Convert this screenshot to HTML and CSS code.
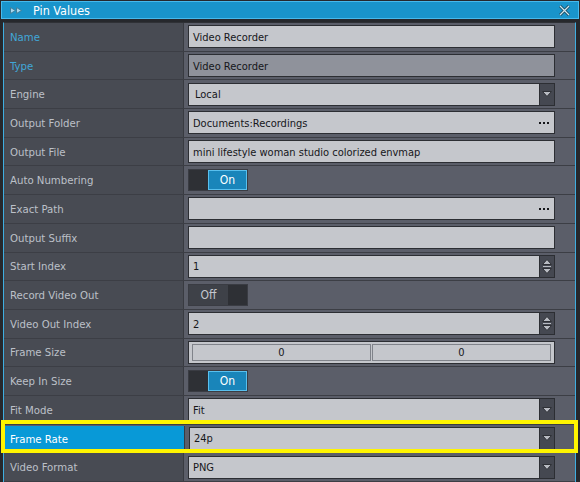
FILE: index.html
```html
<!DOCTYPE html>
<html>
<head>
<meta charset="utf-8">
<link rel="stylesheet" href="styles.css">
</head>
<body>
<div class="window">
  <div class="titlebar">
    <svg class="ff" width="13" height="7" viewBox="0 0 13 7"><path d="M0.5 0.5 L5.5 3.5 L0.5 6.5 Z M6.5 0.5 L11.5 3.5 L6.5 6.5 Z" fill="#a9d8ee" stroke="#3f7f9c" stroke-width="1"/></svg>
    <span class="title">Pin Values</span>
    <svg class="close" width="11" height="11" viewBox="0 0 11 11"><path d="M1 1 L10 10 M10 1 L1 10" stroke="#1d4a5e" stroke-width="3"/><path d="M1 1 L10 10 M10 1 L1 10" stroke="#cfe8f2" stroke-width="1.2"/></svg>
  </div>
  <div class="panel">
    <div class="row"><div class="label hl">Name</div><div class="val"><div class="field">Video Recorder</div></div></div>
    <div class="row"><div class="label hl">Type</div><div class="val"><div class="field dis">Video Recorder</div></div></div>
    <div class="row"><div class="label">Engine</div><div class="val"><div class="combo"><div class="field sel">Local</div><div class="btn"><svg width="10" height="6" viewBox="0 0 10 6"><path d="M0.5 0.5 L9.5 0.5 L5 5.5 Z" fill="#b8bbc2" stroke="#2e3036" stroke-width="1"/></svg></div></div></div></div>
    <div class="row"><div class="label">Output Folder</div><div class="val"><div class="field dots">Documents:Recordings<span class="ell"><i></i><i></i><i></i></span></div></div></div>
    <div class="row"><div class="label">Output File</div><div class="val"><div class="field">mini lifestyle woman studio colorized envmap</div></div></div>
    <div class="row"><div class="label">Auto Numbering</div><div class="val"><div class="toggle on"><span class="knob"></span><span class="state">On</span></div></div></div>
    <div class="row"><div class="label">Exact Path</div><div class="val"><div class="field dots"><span class="ell"><i></i><i></i><i></i></span></div></div></div>
    <div class="row"><div class="label">Output Suffix</div><div class="val"><div class="field"></div></div></div>
    <div class="row"><div class="label">Start Index</div><div class="val"><div class="combo"><div class="field">1</div><div class="btn spin"><svg width="10" height="17" viewBox="0 0 10 17"><path d="M0.5 6.5 L9.5 6.5 L5 1.5 Z M0.5 10.5 L9.5 10.5 L5 15.5 Z" fill="#b8bbc2" stroke="#2e3036" stroke-width="1"/><path d="M1 8.5 H9" stroke="#b8bbc2" stroke-width="1"/></svg></div></div></div></div>
    <div class="row"><div class="label">Record Video Out</div><div class="val"><div class="toggle off"><span class="state">Off</span><span class="knob"></span></div></div></div>
    <div class="row"><div class="label">Video Out Index</div><div class="val"><div class="combo"><div class="field">2</div><div class="btn spin"><svg width="10" height="17" viewBox="0 0 10 17"><path d="M0.5 6.5 L9.5 6.5 L5 1.5 Z M0.5 10.5 L9.5 10.5 L5 15.5 Z" fill="#b8bbc2" stroke="#2e3036" stroke-width="1"/><path d="M1 8.5 H9" stroke="#b8bbc2" stroke-width="1"/></svg></div></div></div></div>
    <div class="row"><div class="label">Frame Size</div><div class="val"><div class="pair"><div class="num">0</div><div class="num">0</div></div></div></div>
    <div class="row"><div class="label">Keep In Size</div><div class="val"><div class="toggle on"><span class="knob"></span><span class="state">On</span></div></div></div>
    <div class="row"><div class="label">Fit Mode</div><div class="val"><div class="combo"><div class="field">Fit</div><div class="btn"><svg width="10" height="6" viewBox="0 0 10 6"><path d="M0.5 0.5 L9.5 0.5 L5 5.5 Z" fill="#b8bbc2" stroke="#2e3036" stroke-width="1"/></svg></div></div></div></div>
    <div class="row"><div class="label act">Frame Rate</div><div class="val"><div class="combo"><div class="field">24p</div><div class="btn"><svg width="10" height="6" viewBox="0 0 10 6"><path d="M0.5 0.5 L9.5 0.5 L5 5.5 Z" fill="#b8bbc2" stroke="#2e3036" stroke-width="1"/></svg></div></div></div></div>
    <div class="row"><div class="label">Video Format</div><div class="val"><div class="combo"><div class="field">PNG</div><div class="btn"><svg width="10" height="6" viewBox="0 0 10 6"><path d="M0.5 0.5 L9.5 0.5 L5 5.5 Z" fill="#b8bbc2" stroke="#2e3036" stroke-width="1"/></svg></div></div></div></div>
  </div>
  <div class="highlight"></div>
</div>
</body>
</html>
```
FILE: styles.css
```css
* { box-sizing: border-box; }
html, body { margin: 0; padding: 0; }
body {
  background: #26282c;
  font-family: "DejaVu Sans Condensed", "Liberation Sans", sans-serif;
  font-size: 11px;
}
.window {
  position: relative;
  width: 580px;
  height: 482px;
  overflow: hidden;
  padding-top: 1px;
}
.titlebar {
  margin: 0 1px;
  height: 18px;
  background: #1994cb;
  border: 1px solid #46b9ec;
  display: flex;
  align-items: center;
  padding-left: 8px;
  padding-right: 8px;
}
.ff { display: block; }
.title {
  color: #ffffff;
  margin-left: 10px;
  font-size: 12.5px;
  flex: 1;
}
.close { display: block; }
.panel {
  margin: 3px 4px 0 3px;
  border-left: 1px solid #3eaee0;
  border-right: 1px solid #3eaee0;
  border-top: 1px solid #2f3136;
  background: #5b5e69;
}
.row {
  display: flex;
  height: 28.7px;
  border-bottom: 1px solid #3c3e45;
}
.label {
  width: 180px;
  flex: none;
  background: #484b53;
  border-right: 1px solid #393b41;
  color: #bcc0c8;
  display: flex;
  align-items: center;
  padding-left: 6px;
  padding-top: 1px;
  font-size: 11.3px;
}
.label.hl { color: #41a7d8; }
.label.act {
  color: #ffffff;
  background: #0899d7;
  margin: 1px 0 0 1px;
  padding-left: 5px;
}
.val {
  flex: 1;
  display: flex;
  align-items: center;
  padding-left: 4px;
  padding-right: 20px;
}
.field {
  height: 23px;
  flex: 1;
  width: 100%;
  background: #c5c7cc;
  border: 1px solid #2c2e33;
  color: #15161a;
  display: flex;
  align-items: center;
  padding-left: 4px;
  padding-top: 1px;
  font-size: 11px;
  white-space: nowrap;
}
.field.dis { background: #8f929b; }
.field.sel { padding-left: 6px; }
.ell {
  margin-left: auto;
  margin-right: 5px;
  display: flex;
  gap: 2px;
}
.ell i {
  width: 2px;
  height: 2px;
  background: #15161a;
  display: block;
}
.combo {
  flex: 1;
  display: flex;
  height: 23px;
}
.btn {
  width: 15px;
  flex: none;
  background: #454851;
  border: 1px solid #2c2e33;
  border-left: none;
  display: flex;
  align-items: center;
  justify-content: center;
}
.btn svg { display: block; }
.toggle {
  width: 60px;
  height: 22px;
  display: flex;
  border: 1px solid #3a3c43;
  background: #2e3035;
}
.toggle .knob {
  width: 19px;
  background: #2e3035;
}
.toggle .state {
  flex: 1;
  display: flex;
  align-items: center;
  justify-content: center;
  font-size: 12px;
}
.toggle.on .state {
  background: #1985ba;
  border: 1px solid #59c0ee;
  color: #ffffff;
}
.toggle.off .state {
  background: #3e4148;
  color: #c4c7ce;
}
.pair {
  flex: 1;
  height: 23px;
  background: #c5c7cc;
  border: 1px solid #2c2e33;
  display: flex;
  gap: 1px;
  padding: 2px 3px;
}
.num {
  flex: 1;
  border: 1px solid #80838a;
  display: flex;
  align-items: center;
  justify-content: center;
  color: #15161a;
  font-size: 11px;
}
.highlight {
  position: absolute;
  left: 1px;
  top: 420px;
  width: 577px;
  height: 33px;
  border: 4px solid #fff500;
}
```
